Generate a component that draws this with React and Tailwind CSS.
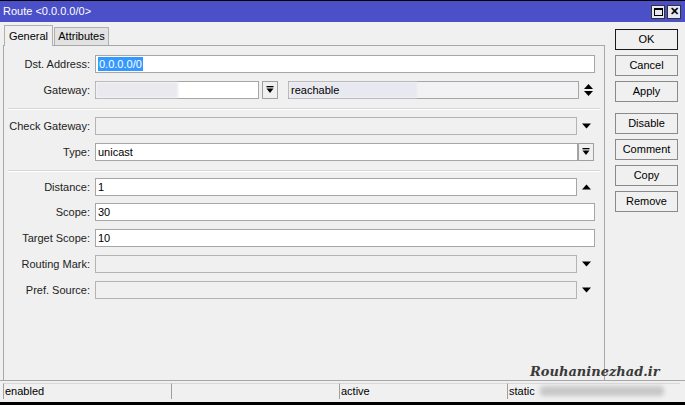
import React from 'react'

const FONT = { fontFamily: '"Liberation Sans", Arial, sans-serif' }

function Down() {
  return (
    <svg width="9" height="6" viewBox="0 0 9 6" className="shrink-0">
      <path d="M0 0.5 H9 L4.5 5.5 Z" fill="#000" />
    </svg>
  )
}

function Up() {
  return (
    <svg width="9" height="6" viewBox="0 0 9 6" className="shrink-0">
      <path d="M0 5.5 H9 L4.5 0.5 Z" fill="#000" />
    </svg>
  )
}

function UpDown() {
  return (
    <svg width="9" height="14" viewBox="0 0 9 14" className="shrink-0">
      <path d="M0 6 H9 L4.5 1 Z" fill="#000" />
      <path d="M0 8 H9 L4.5 13 Z" fill="#000" />
    </svg>
  )
}

function DropBtn() {
  return (
    <div className="w-[16px] h-[18px] border border-[#a0a0a0] bg-[#f0f0f0] flex items-center justify-center">
      <svg width="8" height="8" viewBox="0 0 8 8">
        <rect x="0.5" y="0" width="7" height="1.3" fill="#000" />
        <path d="M0.5 2.5 H7.5 L4 7 Z" fill="#000" />
      </svg>
    </div>
  )
}

function Field({ value, disabled, w = 'w-[500px]' }) {
  return (
    <div
      className={`${w} h-[18px] border border-[#a6a6a6] flex items-center px-[2px] ${
        disabled ? 'bg-[#f0f0f0] border-[#b4b4b4]' : 'bg-white'
      }`}
    >
      {value}
    </div>
  )
}

function Row({ label, children, className = '' }) {
  return (
    <div className={`flex items-center h-[18px] ${className}`}>
      <div className="w-[86px] text-right text-[#222]">{label}</div>
      <div className="ml-[5px] flex items-center">{children}</div>
    </div>
  )
}

function Arrow({ children }) {
  return <div className="w-[18px] flex justify-center">{children}</div>
}

function Sep({ className = '' }) {
  return <div className={`mx-[4px] h-[2px] border-t border-[#d5d5d5] border-b border-b-white ${className}`} />
}

const BUTTONS = [
  ['OK', 'mt-[7px]', true],
  ['Cancel', 'mt-[5px]'],
  ['Apply', 'mt-[5px]'],
  ['Disable', 'mt-[11px]'],
  ['Comment', 'mt-[5px]'],
  ['Copy', 'mt-[5px]'],
  ['Remove', 'mt-[5px]'],
]

export default function App() {
  return (
    <div
      className="relative w-[685px] h-[405px] bg-[#f0f0f0] flex flex-col text-[11px] text-black overflow-hidden border-t border-black"
      style={FONT}
    >
      {/* Title bar */}
      <div className="h-[21px] bg-[#4b50c9] flex items-center pl-[3px] pr-[4px] shrink-0">
        <span className="text-white text-[11px]">Route &lt;0.0.0.0/0&gt;</span>
        <div className="ml-auto flex gap-[2px]">
          <div className="w-[14px] h-[14px] bg-[#e8e8f0] border border-[#333] flex items-center justify-center">
            <div className="w-[9px] h-[8px] border border-black border-t-2" />
          </div>
          <div className="w-[14px] h-[14px] bg-[#e8e8f0] border border-[#333] flex items-center justify-center text-[11px] font-bold leading-none">
            ✕
          </div>
        </div>
      </div>

      <div className="flex flex-1 min-h-0">
        {/* Left: tabs + panel */}
        <div className="pl-[3px] flex flex-col w-[605px]">
          <div className="h-[23px] flex items-end shrink-0">
            <div className="h-[21px] w-[49px] ml-[1px] border border-b-0 border-[#b0b0b0] bg-[#f0f0f0] flex items-center justify-center relative top-[1px] z-10">
              General
            </div>
            <div className="h-[18px] w-[55px] ml-[1px] border border-b-0 border-[#b0b0b0] bg-[#e2e2e2] flex items-center justify-center">
              Attributes
            </div>
          </div>
          <div className="flex-1 border border-b-0 border-[#a8a8a8] pt-[9px]">
            <Row label="Dst. Address:">
              <Field
                value={<span className="bg-[#3399ff] text-white px-[1px] leading-[14px]">0.0.0.0/0</span>}
              />
            </Row>
            <Row label="Gateway:" className="mt-[8px]">
              <div className="w-[164px] h-[18px] border border-[#a6a6a6] bg-white flex">
                <div className="w-[82px] h-full bg-[#e9e9ef] blur-[1px]" />
              </div>
              <div className="ml-[3px]">
                <DropBtn />
              </div>
              <div className="ml-[10px] w-[291px] h-[18px] border border-[#a6a6a6] bg-[#f2f2f4] flex items-center relative">
                <div className="absolute left-0 top-0 w-[128px] h-full bg-[#e8e8f0] blur-[1px]" />
                <span className="relative pl-[2px]">reachable</span>
              </div>
              <Arrow>
                <UpDown />
              </Arrow>
            </Row>
            <Sep className="mt-[9px]" />
            <Row label="Check Gateway:" className="mt-[7px]">
              <Field disabled w="w-[482px]" />
              <Arrow>
                <Down />
              </Arrow>
            </Row>
            <Row label="Type:" className="mt-[8px]">
              <Field value="unicast" w="w-[483px]" />
              <DropBtn />
            </Row>
            <Sep className="mt-[9px]" />
            <Row label="Distance:" className="mt-[6px]">
              <Field value="1" w="w-[482px]" />
              <Arrow>
                <Up />
              </Arrow>
            </Row>
            <Row label="Scope:" className="mt-[7px]">
              <Field value="30" />
            </Row>
            <Row label="Target Scope:" className="mt-[8px]">
              <Field value="10" />
            </Row>
            <Row label="Routing Mark:" className="mt-[8px]">
              <Field disabled w="w-[482px]" />
              <Arrow>
                <Down />
              </Arrow>
            </Row>
            <Row label="Pref. Source:" className="mt-[8px]">
              <Field disabled w="w-[482px]" />
              <Arrow>
                <Down />
              </Arrow>
            </Row>
          </div>
        </div>

        {/* Right: buttons */}
        <div className="flex flex-col pl-[10px]">
          {BUTTONS.map(([label, mt, def]) => (
            <div
              key={label}
              className={`${mt} w-[63px] h-[21px] flex items-center justify-center bg-[#f0f0f0] ${
                def ? 'border border-[#1a1a1a]' : 'border border-[#8a8a8a]'
              }`}
            >
              {label}
            </div>
          ))}
        </div>
      </div>

      {/* Status bar */}
      <div className="h-[25px] shrink-0 border-t border-[#a8a8a8] flex pl-[3px] pt-[2px] pb-[3px] border-b-[3px] border-b-black">
        {['enabled', '', 'active', 'static'].map((t, i) => (
          <div
            key={i}
            className={`h-full border-l border-[#a0a0a0] border-t border-t-[#d8d8d8] pl-[1px] flex items-center ${
              i === 3 ? 'w-[173px]' : 'w-[168px]'
            }`}
          >
            {t}
          </div>
        ))}
      </div>

      {/* Watermark */}
      <div className="absolute left-[540px] top-[385px] w-[124px] h-[10px] bg-[#c8c8c8] blur-[2px] rounded" />
      <div
        className="absolute left-[530px] top-[361px] text-[13px] italic font-bold text-[#3a3a3a]"
        style={{ fontFamily: '"DejaVu Serif", serif' }}
      >
        Rouhaninezhad.ir
      </div>
    </div>
  )
}
